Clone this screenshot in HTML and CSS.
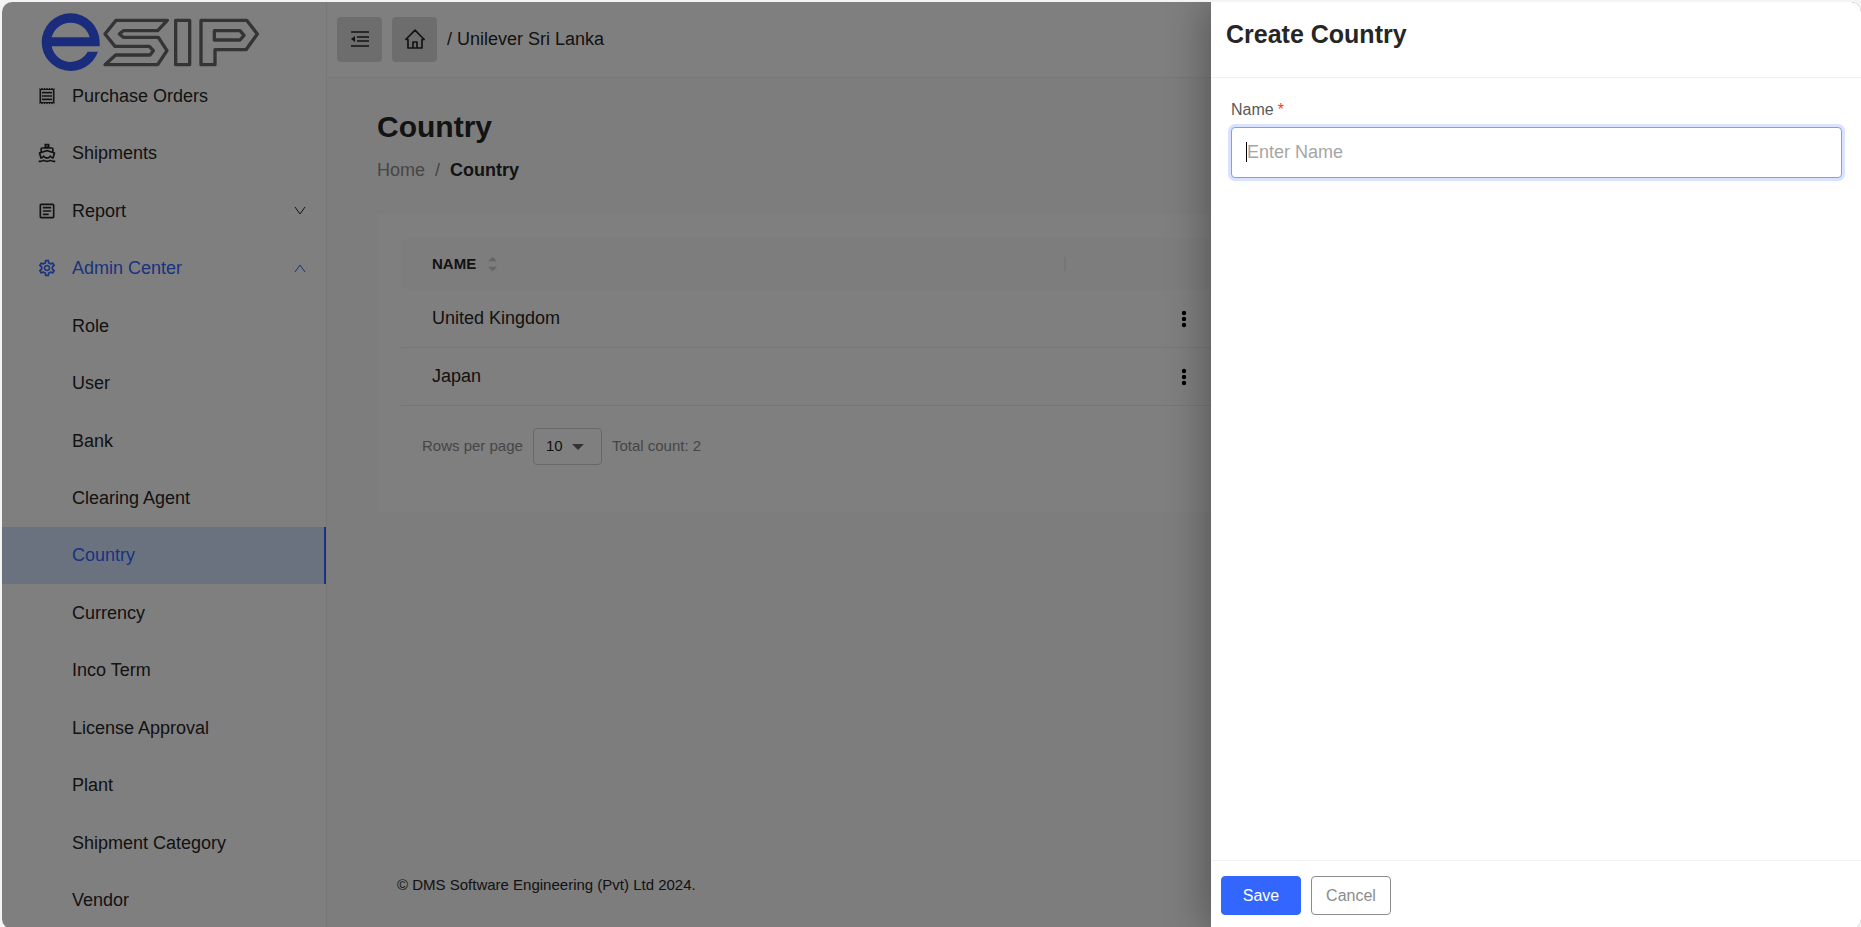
FILE: index.html
```html
<!DOCTYPE html>
<html lang="en">
<head>
<meta charset="utf-8">
<title>eSIP - Country</title>
<link rel="stylesheet" href="styles.css">
</head>
<body>
<div class="app">
  <aside class="sidebar">
    <div class="brand">
      <svg class="brand-logo" viewBox="0 0 720 204" role="img" aria-label="eSIP">
        <path fill="#3659f8" fill-rule="evenodd" d="M209 115V103A87 87 0 0 0 35 103A87 87 0 0 0 204 131H173A58 58 0 0 1 65 115ZM65 88A59 59 0 0 1 179 88Z"/>
        <g fill="none" stroke="#68686a" stroke-width="10" stroke-linejoin="round">
          <path d="M412 37H258L225 78L255 115H358L370 128L360 141H257L225 170H383L411 128L385 88H280L268 78L280 68H383Z"/>
          <rect x="437" y="37" width="42" height="133"/>
          <path d="M513 37H650L682 78L648 125H555V170H513ZM553 68H630L642 82L630 96H553Z"/>
        </g>
      </svg>
    </div>
    <nav class="nav" aria-label="Main">
      <a class="nav-item" href="#"><svg class="nav-icon" viewBox="0 0 24 24"><path d="M19.5 3.5L18 2l-1.5 1.5L15 2l-1.5 1.5L12 2l-1.5 1.5L9 2 7.5 3.5 6 2 4.5 3.5 3 2v20l1.5-1.5L6 22l1.5-1.5L9 22l1.5-1.5L12 22l1.5-1.5L15 22l1.5-1.5L18 22l1.5-1.5L21 22V2l-1.5 1.5zM19 19.09H5V4.91h14v14.18zM6 15h12v2H6zm0-4h12v2H6zm0-4h12v2H6z"/></svg><span>Purchase Orders</span></a>
      <a class="nav-item" href="#"><svg class="nav-icon" viewBox="0 0 24 24"><path fill-rule="evenodd" d="M9 1h6v4h3c1.100 0 2 .9 2 2v3.620l1.280.42c.26.080.48.26.6.5s.14.52.06.78L20.050 19H20c-1.600 0-3.020-.88-4-2-.98 1.120-2.400 2-4 2s-3.020-.88-4-2c-.98 1.120-2.400 2-4 2h-.050l-1.900-6.680c-.090-.26-.060-.54.060-.78s.34-.42.6-.5L4 10.620V7c0-1.100.9-2 2-2h3zM11 3v1h2V3zM6 9.970V7h12v2.970L12 8zM4.300 12.600 12 10.100l7.700 2.500-1.100 3.900c-1-.4-1.800-1.100-2.600-2.200-1 1.400-2.300 2.600-4 2.600s-3-1.200-4-2.600c-.8 1.100-1.600 1.800-2.600 2.200z"/><path d="M20 21c-1.390 0-2.780-.47-4-1.320-2.440 1.710-5.560 1.710-8 0C6.780 20.530 5.390 21 4 21H2v2h2c1.380 0 2.740-.35 4-.99 2.520 1.290 5.480 1.290 8 0 1.260.65 2.620.99 4 .99h2v-2z"/></svg><span>Shipments</span></a>
      <a class="nav-item" href="#"><svg class="nav-icon" viewBox="0 0 24 24"><path d="M19 5v14H5V5h14m0-2H5c-1.100 0-2 .9-2 2v14c0 1.100.9 2 2 2h14c1.100 0 2-.9 2-2V5c0-1.100-.9-2-2-2zM14 17H7v-2h7v2zm3-4H7v-2h10v2zm0-4H7V7h10v2z"/></svg><span>Report</span><svg class="nav-arrow" viewBox="0 0 12 12"><path d="M1 2l5 7 5-7"/></svg></a>
      <a class="nav-item nav-open" href="#"><svg class="nav-icon" viewBox="0 0 24 24"><path d="M19.430 12.980c.040-.32.070-.64.070-.98 0-.34-.030-.66-.070-.98l2.110-1.650c.19-.15.24-.42.12-.64l-2-3.460c-.090-.16-.26-.25-.44-.25-.060 0-.12.010-.17.030l-2.490 1c-.52-.4-1.080-.73-1.690-.98l-.38-2.650C14.460 2.180 14.250 2 14 2h-4c-.25 0-.46.18-.49.42l-.38 2.650c-.61.25-1.170.59-1.690.98l-2.490-1c-.060-.020-.12-.030-.18-.030-.17 0-.34.090-.43.25l-2 3.460c-.13.22-.070.49.12.64l2.110 1.650c-.040.32-.070.65-.070.98 0 .33.030.66.070.98l-2.110 1.650c-.19.15-.24.42-.12.64l2 3.460c.090.16.26.25.44.25.060 0 .12-.010.17-.030l2.490-1c.52.4 1.080.73 1.690.98l.38 2.650c.030.24.24.42.49.42h4c.25 0 .46-.18.49-.42l.38-2.650c.61-.25 1.170-.59 1.690-.98l2.490 1c.060.020.12.030.18.030.17 0 .34-.090.43-.25l2-3.460c.12-.22.070-.49-.12-.64l-2.110-1.650zm-1.980-1.710c.040.31.050.52.050.73 0 .21-.020.43-.050.73l-.14 1.130.89.7 1.080.84-.7 1.210-1.270-.51-1.040-.42-.9.68c-.43.32-.84.56-1.250.73l-1.060.43-.16 1.130-.2 1.350h-1.400l-.19-1.350-.16-1.130-1.060-.43c-.43-.18-.83-.41-1.230-.71l-.91-.7-1.060.43-1.270.51-.7-1.210 1.080-.84.89-.7-.14-1.130c-.030-.31-.050-.54-.050-.74s.020-.43.050-.73l.14-1.130-.89-.7-1.080-.84.7-1.210 1.270.51 1.040.42.9-.68c.43-.32.84-.56 1.250-.73l1.060-.43.16-1.130.2-1.350h1.390l.19 1.350.16 1.130 1.060.43c.43.18.83.41 1.230.71l.91.7 1.060-.43 1.270-.51.7 1.210-1.070.85-.89.7.14 1.130zM12 8c-2.210 0-4 1.790-4 4s1.790 4 4 4 4-1.790 4-4-1.790-4-4-4zm0 6c-1.100 0-2-.9-2-2s.9-2 2-2 2 .9 2 2-.9 2-2 2z"/></svg><span>Admin Center</span><svg class="nav-arrow" viewBox="0 0 12 12"><path d="M1 10l5-7 5 7"/></svg></a>
      <a class="nav-item nav-sub" href="#">Role</a>
      <a class="nav-item nav-sub" href="#">User</a>
      <a class="nav-item nav-sub" href="#">Bank</a>
      <a class="nav-item nav-sub" href="#">Clearing Agent</a>
      <a class="nav-item nav-sub nav-selected" href="#" aria-current="page">Country</a>
      <a class="nav-item nav-sub" href="#">Currency</a>
      <a class="nav-item nav-sub" href="#">Inco Term</a>
      <a class="nav-item nav-sub" href="#">License Approval</a>
      <a class="nav-item nav-sub" href="#">Plant</a>
      <a class="nav-item nav-sub" href="#">Shipment Category</a>
      <a class="nav-item nav-sub" href="#">Vendor</a>
    </nav>
  </aside>

  <div class="main">
    <header class="topbar">
      <button class="tool" type="button" aria-label="Collapse menu"><svg class="tool-icon" viewBox="0 0 20 20"><path d="M1 3h18M7 8h12M7 12h12M1 17h18" stroke="currentColor" stroke-width="1.700"/><path d="M1 10l4-3v6z" fill="currentColor"/></svg></button>
      <button class="tool" type="button" aria-label="Home"><svg class="tool-icon" viewBox="0 0 20 20" fill="none" stroke="currentColor" stroke-width="1.700" stroke-linejoin="round"><path d="M.8 10.500L10 1.200l9.200 9.300H17V19H3v-8.500zM8 19v-6h4v6"/></svg></button>
      <span>/ Unilever Sri Lanka</span>
    </header>
    <main class="content">
      <h1 class="title">Country</h1>
      <nav class="crumbs" aria-label="Breadcrumb"><a href="#">Home</a><span>/</span><strong>Country</strong></nav>
      <section class="card">
        <table class="grid">
          <colgroup><col class="col-name"><col class="col-action"><col></colgroup>
          <thead>
            <tr><th><div class="th-label"><span>NAME</span><svg class="sorter" viewBox="0 0 10 16"><path d="M5 0l5 5H0zM5 16l5-5H0z"/></svg></div></th><th></th><th></th></tr>
          </thead>
          <tbody>
            <tr><td>United Kingdom</td><td class="action"><button class="more" type="button" aria-label="Actions for United Kingdom"><svg class="more-icon" viewBox="0 0 6 18"><circle cx="3" cy="3" r="2.200"/><circle cx="3" cy="9" r="2.200"/><circle cx="3" cy="15" r="2.200"/></svg></button></td><td></td></tr>
            <tr><td>Japan</td><td class="action"><button class="more" type="button" aria-label="Actions for Japan"><svg class="more-icon" viewBox="0 0 6 18"><circle cx="3" cy="3" r="2.200"/><circle cx="3" cy="9" r="2.200"/><circle cx="3" cy="15" r="2.200"/></svg></button></td><td></td></tr>
          </tbody>
        </table>
        <div class="pager">
          <label for="rows">Rows per page</label>
          <div class="select-box">
            <select class="select" id="rows"><option>10</option><option>20</option><option>50</option></select>
            <svg class="select-arrow" viewBox="0 0 12 6"><path d="M0 0h12L6 6z"/></svg>
          </div>
          <span>Total count: 2</span>
        </div>
      </section>
    </main>
    <footer class="copyright">© DMS Software Engineering (Pvt) Ltd 2024.</footer>
  </div>

  <div class="mask"></div>
  <form class="drawer" role="dialog" aria-labelledby="drawer-title">
    <header class="drawer-head"><h2 class="drawer-title" id="drawer-title">Create Country</h2></header>
    <div class="drawer-body">
      <label class="field-label" for="name">Name<span class="required">*</span></label>
      <div class="field">
        <input class="input" id="name" type="text" placeholder="Enter Name">
        <span class="caret"></span>
      </div>
    </div>
    <footer class="drawer-foot">
      <button class="btn btn-primary" type="button">Save</button>
      <button class="btn" type="button">Cancel</button>
    </footer>
  </form>
</div>
</body>
</html>
```

FILE: styles.css
```css
* { box-sizing: border-box; }

html, body { height: 100%; overflow: hidden; }

body {
  margin: 0;
  padding: 2px 0 0 2px;
  background: #f4f4f4;
  color: #262626;
  font: 18px/28px "Liberation Sans", Arial, sans-serif;
}

button, input, select { font: inherit; color: inherit; }
a { color: inherit; text-decoration: none; }
h1, h2 { margin: 0; }
svg { display: block; }

.app {
  position: relative;
  display: flex;
  height: 100vh;
  overflow: hidden;
  border-radius: 10px;
  background: #fafafa;
}

/* Sidebar */
.sidebar {
  display: flex;
  flex-direction: column;
  flex: none;
  width: 325px;
  background: #fff;
  border-right: 1px solid #f0f0f0;
}
.brand { flex: none; height: 65px; padding: 6px 0 0 28px; }
.brand-logo { width: 240px; height: 68px; }
.nav { flex: 1; display: grid; grid-auto-rows: 1fr; min-height: 0; }
.nav-item {
  display: flex;
  align-items: center;
  padding: 0 20px 0 35px;
  min-height: 0;
}
.nav-sub { padding-left: 70px; }
.nav-icon { width: 20px; height: 20px; margin-right: 15px; fill: currentColor; }
.nav-arrow {
  width: 12px;
  height: 12px;
  margin-left: auto;
  fill: none;
  stroke: currentColor;
}
.nav-open { color: #36f; }
.nav-selected {
  color: #36f;
  background: #d4e4ff;
  border-right: 2px solid #36f;
}

/* Main column */
.main { flex: 1; display: flex; flex-direction: column; min-width: 0; }
.topbar {
  display: flex;
  align-items: center;
  gap: 10px;
  height: 76px;
  padding: 0 10px 1px;
  background: #fff;
  border-bottom: 1px solid #f0f0f0;
}
.tool {
  display: grid;
  place-items: center;
  width: 45px;
  height: 45px;
  padding: 0;
  border: 0;
  border-radius: 4px;
  background: #dadada;
}
.tool-icon { width: 20px; height: 20px; }
.content { flex: 1; padding: 29px 50px 0; }
.title { font-size: 30px; line-height: 40px; }
.crumbs { display: flex; gap: 10px; margin-top: 9px; color: #8c8c8c; }
.crumbs strong { color: #262626; }
.card {
  margin-top: 30px;
  padding: 25px 24px 47px;
  border-radius: 4px;
  background: #fff;
}
.grid { width: 100%; table-layout: fixed; border-collapse: collapse; text-align: left; }
.col-name { width: 48%; }
.col-action { width: 17%; }
.grid thead tr { background: #fafafa; }
.grid th { height: 50px; padding: 0 0 0 31px; font-size: 15px; }
.th-label { display: flex; align-items: center; gap: 12px; height: 14px; border-right: 2px solid #ececec; }
.sorter { width: 9px; height: 16px; fill: #ccc; }
.grid td { height: 58px; padding: 0 31px; border-bottom: 1px solid #ececec; }
.grid .action { padding: 0; text-align: center; }
.more { padding: 4px 10px; border: 0; background: none; vertical-align: middle; }
.more-icon { width: 6px; height: 18px; }
.pager {
  display: flex;
  align-items: center;
  gap: 10px;
  margin-top: 22px;
  padding-left: 21px;
  color: #8c8c8c;
  font-size: 15px;
}
.select-box { position: relative; }
.select {
  display: block;
  width: 69px;
  height: 37px;
  padding: 0 12px;
  border: 1px solid #d0d0d0;
  border-radius: 4px;
  background: #fff;
  color: #262626;
  appearance: none;
}
.select-arrow { position: absolute; top: 16px; right: 18px; width: 12px; height: 6px; fill: #666; pointer-events: none; }
.copyright { padding: 0 70px 30px; font-size: 15px; }

/* Drawer */
.mask { position: absolute; inset: 0; background: rgba(0, 0, 0, .5); }
.drawer {
  position: absolute;
  top: 0;
  right: 0;
  bottom: 0;
  display: flex;
  flex-direction: column;
  width: 650px;
  max-width: 100%;
  background: #fff;
  box-shadow: -8px 0 36px rgba(0, 0, 0, .28);
}
.drawer-head { height: 76px; padding: 16px 15px; border-bottom: 1px solid #f0f0f0; }
.drawer-title { font-size: 25px; line-height: 32px; }
.drawer-body { flex: 1; padding: 18px 19px 0 20px; }
.field-label { display: block; color: #595959; font-size: 16px; line-height: 28px; }
.required { margin-left: 4px; color: #f33; }
.field { position: relative; margin-top: 3px; }
.input {
  display: block;
  width: 100%;
  height: 51px;
  padding: 0 15px;
  border: 1px solid #7ba0f5;
  border-radius: 4px;
  background: #fff;
  box-shadow: 0 0 0 3px #d9e2ff;
  outline: none;
}
.input::placeholder { color: #a6a6a6; opacity: 1; }
.caret { position: absolute; top: 15px; left: 15px; width: 1px; height: 20px; background: #000; }
.drawer-foot { display: flex; gap: 10px; padding: 15px 10px 14px; border-top: 1px solid #f0f0f0; }
.btn {
  width: 80px;
  height: 39px;
  padding: 0;
  border: 1px solid #8c8c8c;
  border-radius: 4px;
  background: #fff;
  color: #8c8c8c;
  font-size: 16px;
}
.btn-primary { border-color: #36f; background: #36f; color: #fff; }
```
